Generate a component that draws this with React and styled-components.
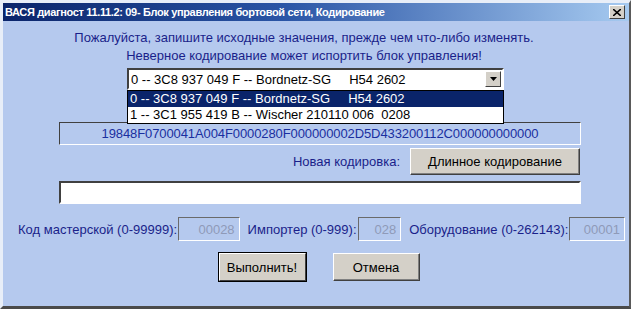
import React from "react";
import styled, { createGlobalStyle } from "styled-components";

const GlobalStyle = createGlobalStyle`
  html, body {
    margin: 0;
    padding: 0;
    background: #b5c9ee;
  }
  body {
    font-family: "Liberation Sans Narrow", "Liberation Sans", Arial, sans-serif;
  }
`;

const Window = styled.div`
  position: relative;
  width: 631px;
  height: 309px;
  box-sizing: border-box;
  background: #b5c9ee;
  border-top: 3px solid #e8eef8;
  border-left: 3px solid #e8eef8;
  border-right: 2px solid #5a5a5a;
  border-bottom: 3px solid #4a4a4a;
  display: flex;
  flex-direction: column;
`;

const TitleBar = styled.div`
  height: 18px;
  display: flex;
  align-items: center;
  justify-content: space-between;
  padding: 0 4px 0 2px;
  background: linear-gradient(90deg, #0a246a 0%, #2a55a6 45%, #a6caf0 100%);
`;

const Title = styled.span`
  color: #fff;
  font-family: "Liberation Sans Narrow", "Liberation Sans", sans-serif;
  font-weight: bold;
  font-size: 11px;
  letter-spacing: -0.35px;
`;

const CloseBtn = styled.button`
  width: 16px;
  height: 14px;
  padding: 0;
  background: #d4d0c8;
  border: 1px solid;
  border-color: #fff #404040 #404040 #fff;
  display: flex;
  align-items: center;
  justify-content: center;
`;

const Body = styled.div`
  flex: 1;
  display: flex;
  flex-direction: column;
  padding: 8px 4px 0 14px;
`;

const Note = styled.div`
  text-align: center;
  color: #1a1f8a;
  font-size: 13px;
  line-height: 18px;
  margin-left: -14px;
  padding-right: 20px;
`;

const ComboWrap = styled.div`
  position: relative;
  margin: 3px 0 0 110px;
  width: 377px;
`;

const Combo = styled.div`
  height: 22px;
  box-sizing: border-box;
  background: #fff;
  border: 2px solid;
  border-color: #404040 #fff #fff #404040;
  display: flex;
  align-items: center;
  font-size: 13px;
  color: #000;
  padding-left: 2px;
  white-space: pre;
`;

const ComboText = styled.span`
  flex: 1;
`;

const Arrow = styled.span`
  width: 16px;
  height: 16px;
  margin-right: 1px;
  box-sizing: border-box;
  background: #d4d0c8;
  border: 1px solid;
  border-color: #fff #404040 #404040 #fff;
  display: flex;
  align-items: center;
  justify-content: center;
`;

const DropList = styled.div`
  position: absolute;
  top: 22px;
  left: 0;
  width: 377px;
  box-sizing: border-box;
  background: #fff;
  border: 1px solid #000;
  z-index: 2;
`;

const Option = styled.div`
  height: 16px;
  line-height: 16px;
  font-size: 13px;
  padding-left: 2px;
  white-space: pre;
  background: ${(p) => (p.$selected ? "#0a246a" : "#fff")};
  color: ${(p) => (p.$selected ? "#fff" : "#000")};
`;

const HexField = styled.div`
  margin: 32px 0 0 42px;
  width: 522px;
  height: 23px;
  box-sizing: border-box;
  border: 1px solid;
  border-color: #404040 #fff #fff #404040;
  display: flex;
  align-items: center;
  justify-content: center;
  color: #1a2fa0;
  font-family: "Liberation Sans", Arial, sans-serif;
  font-size: 13px;
  letter-spacing: -0.1px;
`;

const CodingRow = styled.div`
  display: flex;
  align-items: center;
  justify-content: flex-end;
  gap: 10px;
  margin: 3px 0 0 0;
  width: 563px;
`;

const Label = styled.span`
  color: #1a1f8a;
  font-size: 13px;
  white-space: nowrap;
`;

const Button = styled.button`
  height: ${(p) => p.$h || 27}px;
  width: ${(p) => p.$w}px;
  box-sizing: border-box;
  background: #d4d0c8;
  font-family: "Liberation Sans Narrow", "Liberation Sans", Arial, sans-serif;
  font-size: 13px;
  color: #000;
  padding: 0;
  border: 1px solid;
  border-color: #fff #404040 #404040 #fff;
  box-shadow: ${(p) =>
    p.$default ? "0 0 0 1px #000" : "inset -1px -1px 0 #808080"};
`;

const NewCoding = styled.input`
  margin: 6px 0 0 42px;
  width: 522px;
  height: 23px;
  box-sizing: border-box;
  background: #fff;
  border: 2px solid;
  border-color: #404040 #fff #fff #404040;
  outline: none;
`;

const FieldsRow = styled.div`
  display: flex;
  align-items: center;
  margin: 13px 0 0 1px;
`;

const NumBox = styled.div`
  width: ${(p) => p.$w}px;
  height: 24px;
  box-sizing: border-box;
  margin: 0 ${(p) => p.$mr || 0}px 0 1px;
  border: 1px solid;
  border-color: #6a6a6a #fff #fff #6a6a6a;
  display: flex;
  align-items: center;
  justify-content: flex-end;
  padding-right: 4px;
  color: #8f9ab8;
  font-size: 13px;
`;

const Actions = styled.div`
  display: flex;
  justify-content: center;
  gap: 27px;
  margin: 12px 0 0 0;
  padding-right: 4px;
`;

export default function App() {
  return (
    <>
      <GlobalStyle />
      <Window>
        <TitleBar>
          <Title>ВАСЯ диагност 11.11.2: 09- Блок управления бортовой сети, Кодирование</Title>
          <CloseBtn>
            <svg width="8" height="7" viewBox="0 0 8 7">
              <path d="M0 0 L8 7 M8 0 L0 7" stroke="#000" strokeWidth="1.6" />
            </svg>
          </CloseBtn>
        </TitleBar>
        <Body>
          <Note>Пожалуйста, запишите исходные значения, прежде чем что-либо изменять.</Note>
          <Note>Неверное кодирование может испортить блок управления!</Note>
          <ComboWrap>
            <Combo>
              <ComboText>0 -- 3C8 937 049 F -- Bordnetz-SG     H54 2602</ComboText>
              <Arrow>
                <svg width="7" height="4" viewBox="0 0 7 4">
                  <path d="M0 0 H7 L3.5 4 Z" fill="#000" />
                </svg>
              </Arrow>
            </Combo>
            <DropList>
              <Option $selected>0 -- 3C8 937 049 F -- Bordnetz-SG     H54 2602</Option>
              <Option>1 -- 3C1 955 419 B -- Wischer 210110 006  0208</Option>
            </DropList>
          </ComboWrap>
          <HexField>19848F0700041A004F0000280F000000002D5D433200112C000000000000</HexField>
          <CodingRow>
            <Label>Новая кодировка:</Label>
            <Button $w={170} $h={27}>Длинное кодирование</Button>
          </CodingRow>
          <NewCoding />
          <FieldsRow>
            <Label>Код мастерской (0-99999):</Label>
            <NumBox $w={62} $mr={8}>00028</NumBox>
            <Label>Импортер (0-999):</Label>
            <NumBox $w={44} $mr={8}>028</NumBox>
            <Label>Оборудование (0-262143):</Label>
            <NumBox $w={56}>00001</NumBox>
          </FieldsRow>
          <Actions>
            <Button $w={87} $h={28} $default>Выполнить!</Button>
            <Button $w={87} $h={28}>Отмена</Button>
          </Actions>
        </Body>
      </Window>
    </>
  );
}
